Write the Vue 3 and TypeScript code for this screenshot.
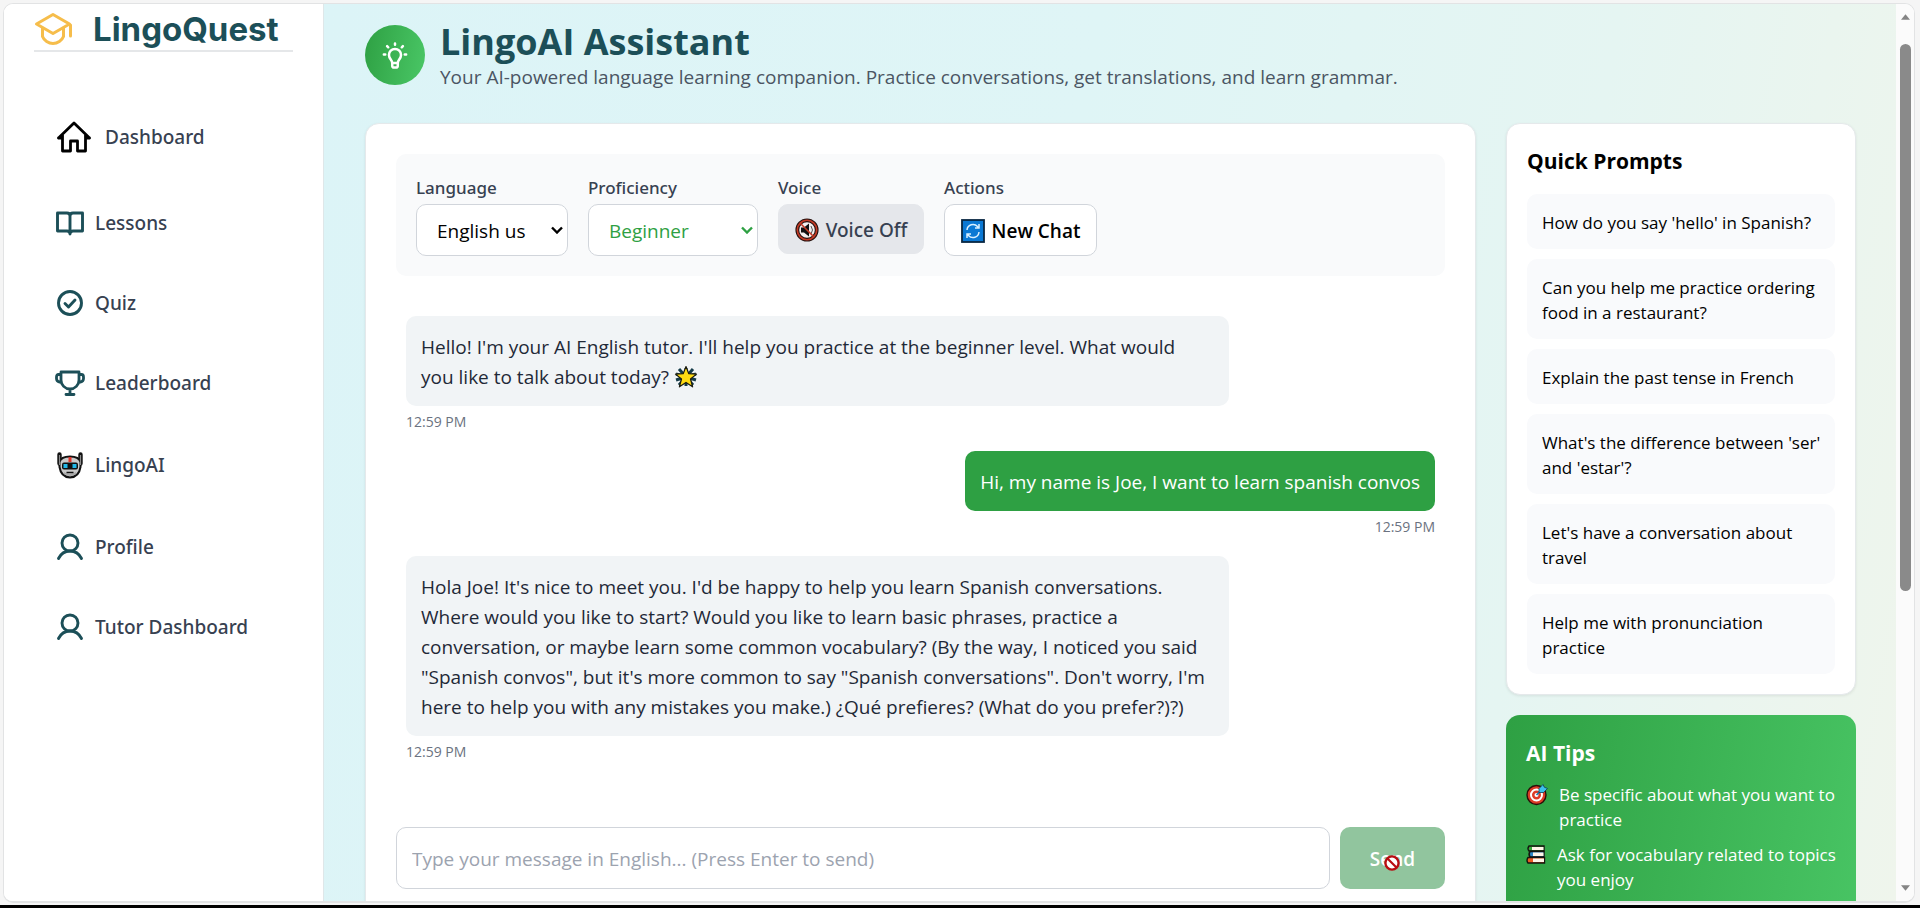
<script setup lang="ts">
import { ref } from 'vue'

type IconName = 'home' | 'book' | 'check' | 'trophy' | 'robot' | 'user'

interface NavItem {
  label: string
  icon: IconName
}

interface Message {
  from: 'bot' | 'user'
  text: string
  time: string
  star?: boolean
}

const navItems: NavItem[] = [
  { label: 'Dashboard', icon: 'home' },
  { label: 'Lessons', icon: 'book' },
  { label: 'Quiz', icon: 'check' },
  { label: 'Leaderboard', icon: 'trophy' },
  { label: 'LingoAI', icon: 'robot' },
  { label: 'Profile', icon: 'user' },
  { label: 'Tutor Dashboard', icon: 'user' },
]

const messages: Message[] = [
  {
    from: 'bot',
    text: "Hello! I'm your AI English tutor. I'll help you practice at the beginner level. What would you like to talk about today?",
    time: '12:59 PM',
    star: true,
  },
  {
    from: 'user',
    text: 'Hi, my name is Joe, I want to learn spanish convos',
    time: '12:59 PM',
  },
  {
    from: 'bot',
    text: 'Hola Joe! It\'s nice to meet you. I\'d be happy to help you learn Spanish conversations. Where would you like to start? Would you like to learn basic phrases, practice a conversation, or maybe learn some common vocabulary? (By the way, I noticed you said "Spanish convos", but it\'s more common to say "Spanish conversations". Don\'t worry, I\'m here to help you with any mistakes you make.) ¿Qué prefieres? (What do you prefer?)?)',
    time: '12:59 PM',
  },
]

const prompts: string[] = [
  "How do you say 'hello' in Spanish?",
  'Can you help me practice ordering food in a restaurant?',
  'Explain the past tense in French',
  "What's the difference between 'ser' and 'estar'?",
  "Let's have a conversation about travel",
  'Help me with pronunciation practice',
]

const language = ref('en')
const level = ref('beginner')
const draft = ref('')
</script>

<template>
  <div class="screen">
    <div class="window">
      <aside class="sidebar">
        <div class="brand">
          <svg class="brand-icon" viewBox="0 0 40 34" fill="none" stroke="#f6bd4b" stroke-width="3" stroke-linecap="round" stroke-linejoin="round">
            <path d="M2.500 12 19 2.500 35.500 12 19 21.500z" />
            <path d="M8.500 16v8.500c1.500 4 6 7 10.500 7s9-3 10.500-7V16M36.500 13v11" />
          </svg>
          <span class="brand-name">LingoQuest</span>
        </div>
        <nav class="nav">
          <a v-for="item in navItems" :key="item.label" href="#" class="nav-link" :class="'nav-' + item.icon">
            <svg v-if="item.icon === 'home'" class="icon-home" viewBox="0 0 34 32" fill="none" stroke="#000" stroke-width="2.800" stroke-linejoin="round" stroke-linecap="round">
              <path d="M1.500 17 17 2l15.500 15M5.500 14v16h8V20h7v10h8V14M1.500 17h4M28.500 17h4" />
            </svg>
            <svg v-else-if="item.icon === 'book'" class="icon" viewBox="0 0 28 28" fill="none" stroke="#1c4f58" stroke-width="2.900" stroke-linejoin="round" stroke-linecap="round">
              <path d="M1.500 4h9.500q3 0 3 3 0-3 3-3h9.500v18H17q-3 0-3 3 0-3-3-3H1.500zM14 7v17" />
            </svg>
            <svg v-else-if="item.icon === 'check'" class="icon" viewBox="0 0 28 28" fill="none" stroke="#1c4f58" stroke-width="2.900" stroke-linejoin="round" stroke-linecap="round">
              <circle cx="14" cy="14" r="11.500" />
              <path d="m9 14.500 3.500 3.500 6.500-7" />
            </svg>
            <svg v-else-if="item.icon === 'trophy'" class="icon" viewBox="0 0 30 28" fill="none" stroke="#1c4f58" stroke-width="2.800" stroke-linejoin="round" stroke-linecap="round">
              <path d="M6 3h18v8c0 5-4 9-9 9s-9-4-9-9zM15 20v5M11 25.500h8M6 5.500H3.500Q1.500 5.500 1.500 8v1.500q0 3 3 3.500H6M24 5.500h2.500q2 0 2 2.500v1.500q0 3-3 3.500H24" />
            </svg>
            <svg v-else-if="item.icon === 'robot'" class="icon" viewBox="0 0 28 28">
              <path d="M3.500 3.500v9M24.500 3.500v9" stroke="#111" stroke-width="4.400" stroke-linecap="round" />
              <path d="M3.500 11Q5 5.500 14 5.500T24.500 11v5q-1.500 10-10.500 10.500Q5 26 3.500 16z" fill="#c9c9c9" stroke="#111" stroke-width="2" />
              <path d="M3.500 4v10M24.500 4v10" stroke="#8b8b8b" stroke-width="1.200" />
              <path d="M8 21q6 4 12 0v2q-6 4-12 0z" fill="#a9a9a9" />
              <path d="M12.500 6h3v5h-3z" fill="#e0352b" />
              <rect x="6" y="11.500" width="16" height="7" rx="2" fill="#111" />
              <rect x="7.500" y="13" width="4" height="4" fill="#21b8e8" />
              <rect x="16.500" y="13" width="4" height="4" fill="#21b8e8" />
              <path d="M10.500 21.500h7" stroke="#111" stroke-width="1.500" />
            </svg>
            <svg v-else class="icon" viewBox="0 0 28 28" fill="none" stroke="#1c4f58" stroke-width="2.900" stroke-linecap="round">
              <circle cx="14" cy="10" r="8" />
              <path d="M2.500 25.500C5 20.500 9 18 14 18s9 2.500 11.500 7.500" />
            </svg>
            <span>{{ item.label }}</span>
          </a>
        </nav>
      </aside>

      <main class="main">
        <header class="page-head">
          <div class="head-badge">
            <svg viewBox="0 0 28 32" fill="none" stroke="#fff" stroke-width="2.700" stroke-linecap="round" stroke-linejoin="round">
              <path d="M11 24.500c0-3-3.500-4.500-3.500-8.500a6.500 6.500 0 0 1 13 0c0 4-3.500 5.500-3.500 8.500zM11 24.500v3q0 2 2 2h2q2 0 2-2v-3M14 3.500v1.500M2 15.500h1.500M24.500 15.500H26M5.500 6.500l1.200 1.200M22.500 6.500l-1.200 1.200" />
            </svg>
          </div>
          <div>
            <h1 class="title">LingoAI Assistant</h1>
            <p class="subtitle">Your AI-powered language learning companion. Practice conversations, get translations, and learn grammar.</p>
          </div>
        </header>

        <div class="columns">
          <section class="card chat">
            <div class="toolbar">
              <div class="field">
                <label for="language">Language</label>
                <div class="select-wrap">
                  <select id="language" v-model="language" class="control language">
                    <option value="en">English us</option>
                    <option value="es">Spanish es</option>
                  </select>
                  <svg class="chevron" viewBox="0 0 12 8" fill="none" stroke="#000" stroke-width="2.400"><path d="m1 1.500 5 5 5-5" /></svg>
                </div>
              </div>
              <div class="field">
                <label for="level">Proficiency</label>
                <div class="select-wrap">
                  <select id="level" v-model="level" class="control level">
                    <option value="beginner">Beginner</option>
                    <option value="advanced">Advanced</option>
                  </select>
                  <svg class="chevron" viewBox="0 0 12 8" fill="none" stroke="#2ea043" stroke-width="2.400"><path d="m1 1.500 5 5 5-5" /></svg>
                </div>
              </div>
              <div class="field">
                <label for="voice">Voice</label>
                <button id="voice" type="button" class="control voice">
                  <svg class="glyph" viewBox="0 0 24 24">
                    <circle cx="12" cy="12" r="9.700" fill="#f3efee" stroke="#2b1512" stroke-width="3.800" />
                    <path d="M6 9.500h3l5-4v13l-5-4H6z" fill="#111" />
                    <path d="M16 8q3 4 0 8" fill="none" stroke="#555" stroke-width="1" />
                    <circle cx="12" cy="12" r="9.700" fill="none" stroke="#c43a25" stroke-width="1.600" />
                    <path d="m5 5 14 14" stroke="#c43a25" stroke-width="1.600" />
                  </svg>
                  <span>Voice Off</span>
                </button>
              </div>
              <div class="field">
                <label for="new-chat">Actions</label>
                <button id="new-chat" type="button" class="control new-chat">
                  <svg class="glyph" viewBox="0 0 24 24" fill="none">
                    <rect x="1" y="1" width="22" height="22" fill="#0a78d4" stroke="#082642" stroke-width="1.800" />
                    <path d="M6 11a6 6 0 0 1 10.500-3.500L18 9M18 5v4h-4M18 13a6 6 0 0 1-10.500 3.500L6 15M6 19v-4h4" stroke="#d9efff" stroke-width="1.500" />
                  </svg>
                  <span>New Chat</span>
                </button>
              </div>
            </div>

            <div class="messages">
              <div v-for="(message, index) in messages" :key="index" class="message" :class="message.from">
                <p class="bubble">
                  {{ message.text }}
                  <svg v-if="message.star" class="star" viewBox="0 0 24 24">
                    <path d="M12 3v18M5 4l14 16M19 4 5 20M2 9l20 6M2 15l20-6" stroke="#143a48" stroke-width="3" />
                    <path d="m12 1.500 2.800 7.200 7.700.4-6 4.900 2.100 7.800-6.600-4.400-6.600 4.400L7.500 14l-6-4.900 7.700-.4z" fill="#ffdc12" stroke="#1b1b10" stroke-width="1.200" stroke-linejoin="round" />
                  </svg>
                </p>
                <time class="stamp">{{ message.time }}</time>
              </div>
            </div>

            <form class="composer" @submit.prevent>
              <input v-model="draft" type="text" aria-label="Message" placeholder="Type your message in English... (Press Enter to send)" />
              <button type="submit" class="send" disabled>
                Send
                <svg class="blocked" viewBox="0 0 16 16">
                  <circle cx="8" cy="8" r="6.600" fill="#fff" stroke="#b80d12" stroke-width="2.400" />
                  <path d="m3.500 3.500 9 9" stroke="#b80d12" stroke-width="2.200" />
                </svg>
              </button>
            </form>
          </section>

          <div class="rail">
            <section class="card prompts">
              <h2>Quick Prompts</h2>
              <button v-for="prompt in prompts" :key="prompt" type="button" class="prompt">{{ prompt }}</button>
            </section>
            <section class="tips">
              <h2>AI Tips</h2>
              <ul>
                <li>
                  <svg class="tip-icon" viewBox="0 0 22 22">
                    <circle cx="10.500" cy="11.500" r="9.500" fill="#dc3b26" stroke="#2a0f0a" stroke-width="1.400" />
                    <circle cx="10.500" cy="11.500" r="5.500" fill="#dc3b26" stroke="#fff" stroke-width="2" />
                    <circle cx="10.500" cy="11.500" r="2" fill="#fff" />
                    <path d="m10.500 11.500 5-5" stroke="#1478b0" stroke-width="1.600" />
                    <path d="m13 5 4-4 1.300 2.700L21.500 5l-4 4H13z" fill="#3cc0ec" stroke="#0e3e55" stroke-width=".8" />
                  </svg>
                  <span>Be specific about what you want to practice</span>
                </li>
                <li>
                  <svg class="tip-icon narrow" viewBox="0 0 20 20">
                    <g stroke="#14140f" stroke-width="1.400">
                      <path d="M3 1.500h15v5H3q-2-2.500 0-5z" fill="#36a936" />
                      <path d="M4 7h14v5.500H4q-2-2.500 0-5.500z" fill="#2c87c7" />
                      <path d="M2 13h16.500v5.500H2q-2-2.500 0-5.500z" fill="#ea5b24" />
                    </g>
                    <path d="M6 2.500h11.500v3H6zM7 8h10.500v3.500H7zM7 14h11v3.500H7z" fill="#fff5e8" />
                  </svg>
                  <span>Ask for vocabulary related to topics you enjoy</span>
                </li>
              </ul>
            </section>
          </div>
        </div>
      </main>

      <div class="scrollbar" aria-hidden="true">
        <svg class="arrow" viewBox="0 0 10 6"><path d="M0 6 5 0l5 6z" fill="#858585" /></svg>
        <div class="track"><div class="thumb"></div></div>
        <svg class="arrow" viewBox="0 0 10 6"><path d="m0 0 5 6 5-6z" fill="#858585" /></svg>
      </div>
    </div>
  </div>
</template>

<style>
body {
  margin: 0;
  overflow: hidden;
}
</style>

<style scoped>
* {
  box-sizing: border-box;
}

.screen {
  height: 100vh;
  padding: 3px 5px 2px 3px;
  border-bottom: 3px solid #000;
  background: #f5f5f5;
  font-family: 'Open Sans', 'Noto Sans', sans-serif;
  font-size: 19px;
  color: #1f2937;
}

.window {
  display: flex;
  height: 100%;
  overflow: hidden;
  border: 1px solid #e2e3e4;
  border-bottom-width: 2px;
  border-radius: 10px;
  background: #fff;
}

.sidebar {
  flex: none;
  width: 320px;
  padding: 0 30px;
  border-right: 1px solid #dfe7e9;
  background: #fff;
}

.brand {
  display: flex;
  align-items: center;
  gap: 19px;
  height: 48px;
  padding-top: 4px;
  border-bottom: 2px solid #e5e7e9;
}

.brand-icon {
  width: 40px;
  height: 34px;
}

.brand-name {
  font-family: Inter, sans-serif;
  font-size: 33px;
  font-weight: 700;
  line-height: 44px;
  color: #1c4f58;
}

.nav {
  display: flex;
  flex-direction: column;
  padding: 39px 20px 0 21px;
}

.nav-link {
  display: flex;
  align-items: center;
  gap: 10px;
  height: 80px;
  font-family: 'Noto Sans', 'Open Sans', sans-serif;
  font-weight: 500;
  color: #374151;
  text-decoration: none;
}

.nav-home {
  height: 92px;
  padding-left: 2px;
  gap: 14px;
}

.nav-robot {
  height: 84px;
}

.icon {
  width: 30px;
  height: 28px;
}

.icon-home {
  width: 34px;
  height: 32px;
}

.main {
  flex: 1;
  min-width: 0;
  padding: 20px 40px 0 41px;
  background: linear-gradient(100deg, #dcf4f7 0%, #dff5f6 45%, #e5f5f2 75%, #eff5ec 100%);
}

.page-head {
  display: flex;
  align-items: center;
  gap: 15px;
  height: 62px;
  margin-bottom: 37px;
}

.head-badge {
  display: grid;
  place-items: center;
  flex: none;
  width: 60px;
  height: 60px;
  border-radius: 50%;
  background: linear-gradient(100deg, #2ea043, #4ac766);
}

.head-badge svg {
  width: 26px;
  height: 30px;
}

.title {
  margin: 0;
  padding-top: 6px;
  font-size: 36px;
  font-weight: 700;
  line-height: 38px;
  color: #1c4f58;
}

.subtitle {
  margin: 0;
  line-height: 32px;
  color: #4b5563;
}

.columns {
  display: flex;
  align-items: flex-start;
  gap: 30px;
}

.card {
  border: 1px solid #e5e9eb;
  border-radius: 14px;
  background: #fff;
  box-shadow: 0 1px 3px rgba(0, 0, 0, 0.08);
}

.chat {
  flex: 1;
  min-width: 0;
  padding: 30px;
}

.toolbar {
  display: flex;
  align-items: flex-start;
  flex-wrap: wrap;
  gap: 20px;
  padding: 20px;
  border-radius: 10px;
  background: #f9fafb;
}

.field label {
  display: block;
  margin-bottom: 3px;
  font-family: 'Noto Sans', 'Open Sans', sans-serif;
  font-size: 17px;
  font-weight: 500;
  line-height: 27px;
  color: #374151;
}

.select-wrap {
  position: relative;
}

.control {
  height: 52px;
  border: 1px solid #d1d5db;
  border-radius: 10px;
  background: #fff;
  color: #000;
  font: inherit;
}

select.control {
  appearance: none;
  padding: 2px 20px 0;
}

.language {
  width: 152px;
}

select.level {
  width: 170px;
  color: #2ea043;
}

.chevron {
  position: absolute;
  top: 22px;
  right: 5px;
  width: 12px;
  height: 8px;
  pointer-events: none;
}

button.control {
  display: flex;
  align-items: center;
  justify-content: center;
  gap: 7px;
  padding: 1px 10px 0;
}

button.voice {
  width: 146px;
  height: 50px;
  border-color: #e5e7eb;
  background: #e5e7eb;
  color: #374151;
  font-family: 'Noto Sans', 'Open Sans', sans-serif;
  font-weight: 500;
}

button.new-chat {
  width: 153px;
  font-weight: 600;
}

.glyph {
  flex: none;
  width: 24px;
  height: 24px;
}

.messages {
  display: flex;
  flex-direction: column;
  gap: 20px;
  height: 551px;
  padding: 40px 10px 0;
}

.message {
  display: flex;
  flex-direction: column;
  align-items: flex-start;
}

.message.user {
  align-items: flex-end;
}

.bubble {
  max-width: 80%;
  margin: 0;
  padding: 16px 20px 14px 15px;
  border-radius: 10px;
  background: #f1f4f6;
  line-height: 30px;
}

.user .bubble {
  padding-right: 15px;
  background: #2ea043;
  color: #fff;
}

.star {
  width: 24px;
  height: 24px;
  vertical-align: -5px;
}

.stamp {
  padding-top: 6px;
  font-size: 14px;
  line-height: 19px;
  color: #6b7280;
}

.composer {
  display: flex;
  gap: 10px;
}

.composer input {
  flex: 1;
  min-width: 0;
  height: 62px;
  padding: 2px 15px 0;
  border: 1px solid #d1d5db;
  border-radius: 10px;
  background: #fff;
  font: inherit;
}

.composer input::placeholder {
  color: #9ca3af;
}

.send {
  position: relative;
  width: 105px;
  height: 62px;
  padding: 2px 0 0;
  border: 0;
  border-radius: 10px;
  background: #91c59e;
  color: #fff;
  font: inherit;
  font-weight: 600;
  cursor: not-allowed;
}

.blocked {
  position: absolute;
  top: 28px;
  left: 44px;
  width: 16px;
  height: 16px;
}

.rail {
  display: flex;
  flex-direction: column;
  flex: none;
  gap: 20px;
  width: 350px;
}

h2 {
  margin: 0;
  font-size: 21px;
  font-weight: 700;
  line-height: 34px;
}

.prompts {
  display: flex;
  flex-direction: column;
  gap: 10px;
  padding: 20px;
}

.prompts h2 {
  margin-bottom: 6px;
  color: #000;
}

.prompt {
  padding: 16px 8px 14px 15px;
  border: 0;
  border-radius: 10px;
  background: #f9fafc;
  color: #000;
  font: inherit;
  font-size: 17px;
  line-height: 25px;
  text-align: left;
}

.tips {
  padding: 21px 12px 20px 20px;
  border-radius: 14px;
  background: linear-gradient(100deg, #2ea043, #4ac766);
  color: #fff;
}

.tips ul {
  display: flex;
  flex-direction: column;
  gap: 10px;
  margin: 0;
  padding: 12px 0 200px;
  list-style: none;
}

.tips li {
  display: flex;
  align-items: flex-start;
  gap: 11px;
  font-size: 17px;
  line-height: 25px;
}

.tip-icon {
  flex: none;
  width: 22px;
  height: 25px;
}

.tip-icon.narrow {
  width: 20px;
}

.scrollbar {
  display: flex;
  flex-direction: column;
  align-items: center;
  flex: none;
  width: 18px;
  padding: 10px 0;
  background: #fbfbfb;
}

.arrow {
  width: 9px;
  height: 6px;
}

.track {
  flex: 1;
  padding: 24px 0;
}

.thumb {
  width: 11px;
  height: 67%;
  border-radius: 6px;
  background: #8a8a8a;
}
</style>
